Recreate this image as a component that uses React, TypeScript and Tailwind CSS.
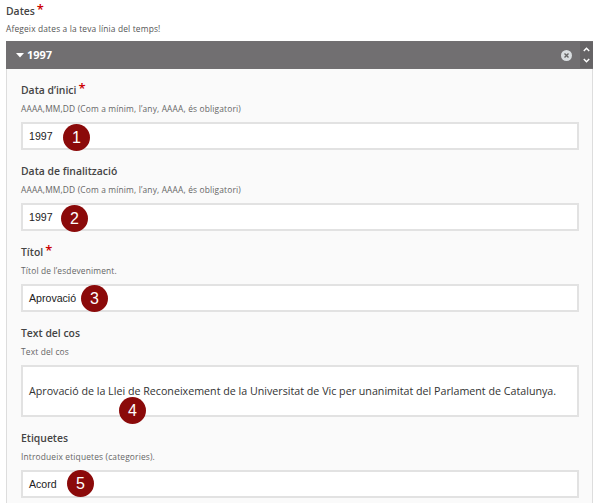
import React from "react";

interface Field {
  label: string;
  help: string;
  value: string;
  required?: boolean;
  badge: number;
  badgeClass: string;
}

const fields: Field[] = [
  {
    label: "Data d’inici",
    help: "AAAA,MM,DD (Com a mínim, l’any, AAAA, és obligatori)",
    value: "1997",
    required: true,
    badge: 1,
    badgeClass: "left-[40px] top-0",
  },
  {
    label: "Data de finalització",
    help: "AAAA,MM,DD (Com a mínim, l’any, AAAA, és obligatori)",
    value: "1997",
    badge: 2,
    badgeClass: "left-[38px] top-0",
  },
  {
    label: "Títol",
    help: "Títol de l’esdeveniment.",
    value: "Aprovació",
    required: true,
    badge: 3,
    badgeClass: "left-[58px] top-[-1px]",
  },
];

const Badge = ({ n, className }: { n: number; className: string }) => (
  <span
    className={`absolute flex h-[27px] w-[27px] items-center justify-center rounded-full bg-[#8b0a0a] text-[16px] text-white ${className}`}
    style={{ fontFamily: '"Liberation Sans", sans-serif' }}
  >
    {n}
  </span>
);

const Star = () => (
  <span className="relative ml-[2px] -top-[3px] text-[13px] leading-none text-[#c00]">*</span>
);

const Label = ({ text, required }: { text: string; required?: boolean }) => (
  <div className="flex h-[20px] items-center text-[10.4px] font-semibold text-[#444]">
    {text}
    {required && <Star />}
  </div>
);

const Help = ({ text }: { text: string }) => (
  <div className="h-[16px] text-[8.4px] leading-[16px] tracking-[0.16px] text-[#666]">{text}</div>
);

const InputBox = ({ value, badge, badgeClass }: { value: string; badge: number; badgeClass: string }) => (
  <div
    className="relative mt-[5px] flex h-[28px] items-center border-2 border-[#e2e2e2] bg-white pl-[6px] pt-px text-[10.6px] text-[#222]"
    style={{ fontFamily: '"Liberation Sans", sans-serif' }}
  >
    {value}
    <Badge n={badge} className={badgeClass} />
  </div>
);

export default function App() {
  return (
    <div
      className="h-[503px] w-[600px] overflow-hidden bg-white pl-[6px] pr-[7px] pt-[3px]"
      style={{ fontFamily: '"Open Sans", sans-serif' }}
    >
      <div className="flex h-[18px] items-center text-[10.4px] font-semibold text-[#444]">
        Dates
        <Star />
      </div>
      <div className="h-[16px] text-[8.4px] leading-[16px] tracking-[0.16px] text-[#555]">
        Afegeix dates a la teva línia del temps!
      </div>

      <div className="mt-[4px] border-x border-[#ddd] bg-[#fafafa]">
        {/* panel header */}
        <div className="-mx-px flex h-[28px] items-center bg-[#716f71] pl-[10px] text-white">
          <svg width="8" height="5" viewBox="0 0 8 5" className="mr-[3px]">
            <path d="M0 0h8L4 4.5z" fill="#fff" />
          </svg>
          <span className="text-[11px] font-bold">1997</span>
          <span className="ml-auto mr-[8px] flex h-[11px] w-[11px] items-center justify-center rounded-full bg-[#d9dde0]">
            <svg width="7" height="7" viewBox="0 0 7 7">
              <path d="M1.5 1.5l4 4M5.5 1.5l-4 4" stroke="#666" strokeWidth="1.4" />
            </svg>
          </span>
          <span className="flex h-[26px] w-[13px] flex-col items-center justify-center gap-[6px] bg-[#666466]">
            <svg width="7" height="5" viewBox="0 0 7 5">
              <path d="M.8 4L3.5 1.2 6.2 4" stroke="#fff" strokeWidth="1.4" fill="none" />
            </svg>
            <svg width="7" height="5" viewBox="0 0 7 5">
              <path d="M.8 1L3.5 3.8 6.2 1" stroke="#fff" strokeWidth="1.4" fill="none" />
            </svg>
          </span>
        </div>

        <div className="pb-[6px] pl-[14px] pr-[13px] pt-[12px]">
          {fields.map((f) => (
            <div key={f.badge} className="mb-[12px]">
              <Label text={f.label} required={f.required} />
              <Help text={f.help} />
              <InputBox value={f.value} badge={f.badge} badgeClass={f.badgeClass} />
            </div>
          ))}

          <div className="mb-[12px]">
            <Label text="Text del cos" />
            <Help text="Text del cos" />
            <div className="relative mt-[5px] flex h-[52px] items-center whitespace-nowrap border-2 border-[#e2e2e2] bg-white pl-[6px] text-[10.7px] text-[#333]">
              Aprovació de la Llei de Reconeixement de la Universitat de Vic per unanimitat del Parlament de Catalunya.
              <Badge n={4} className="left-[96px] top-[30px]" />
            </div>
          </div>

          <div>
            <Label text="Etiquetes" />
            <Help text="Introdueix etiquetes (categories)." />
            <InputBox value="Acord" badge={5} badgeClass="left-[44px] top-[-2px]" />
          </div>
        </div>
      </div>
    </div>
  );
}
